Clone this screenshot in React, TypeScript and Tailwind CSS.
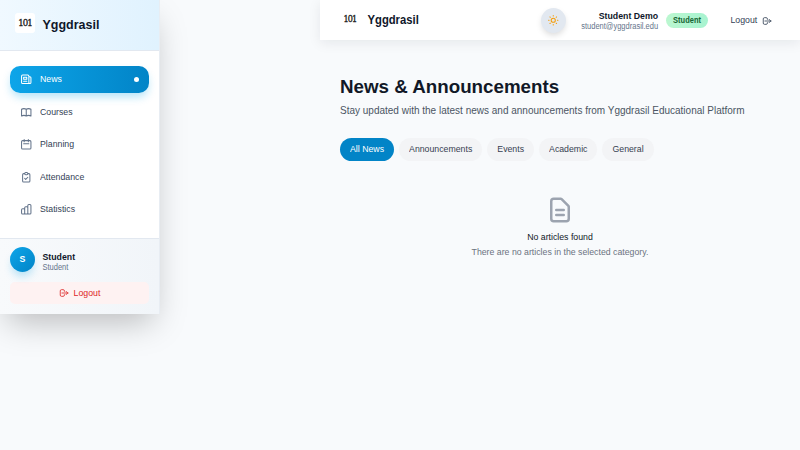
import type { ReactNode } from "react";

const icons = {
  news: "M19 20H5a2 2 0 01-2-2V6a2 2 0 012-2h10a2 2 0 012 2v1m2 13a2 2 0 01-2-2V7m2 13a2 2 0 002-2V9a2 2 0 00-2-2h-2m-4-3H9M7 16h6M7 8h6v4H7V8z",
  book: "M12 6.253v13m0-13C10.832 5.477 9.246 5 7.5 5S4.168 5.477 3 6.253v13C4.168 18.477 5.754 18 7.5 18s3.332.477 4.5 1.253m0-13C13.168 5.477 14.754 5 16.5 5c1.747 0 3.332.477 4.5 1.253v13C19.832 18.477 18.247 18 16.5 18c-1.746 0-3.332.477-4.5 1.253",
  calendar: "M8 7V3m8 4V3m-9 8h10M5 21h14a2 2 0 002-2V7a2 2 0 00-2-2H5a2 2 0 00-2 2v12a2 2 0 002 2z",
  clipboard: "M9 5H7a2 2 0 00-2 2v12a2 2 0 002 2h10a2 2 0 002-2V7a2 2 0 00-2-2h-2M9 5a2 2 0 002 2h2a2 2 0 002-2M9 5a2 2 0 012-2h2a2 2 0 012 2m-6 9l2 2 4-4",
  chart: "M9 19v-6a2 2 0 00-2-2H5a2 2 0 00-2 2v6a2 2 0 002 2h2a2 2 0 002-2zm0 0V9a2 2 0 012-2h2a2 2 0 012 2v10m-6 0a2 2 0 002 2h2a2 2 0 002-2m0 0V5a2 2 0 012-2h2a2 2 0 012 2v14a2 2 0 01-2 2h-2a2 2 0 01-2-2z",
  logout: "M17 16l4-4m0 0l-4-4m4 4H7m6 4v1a3 3 0 01-3 3H6a3 3 0 01-3-3V7a3 3 0 013-3h4a3 3 0 013 3v1",
  sun: "M12 3v1m0 16v1m9-9h-1M4 12H3m15.364 6.364l-.707-.707M6.343 6.343l-.707-.707m12.728 0l-.707.707M6.343 17.657l-.707.707M16 12a4 4 0 11-8 0 4 4 0 018 0z",
  document: "M9 12h6m-6 4h6m2 5H7a2 2 0 01-2-2V5a2 2 0 012-2h5.586a1 1 0 01.707.293l5.414 5.414a1 1 0 01.293.707V19a2 2 0 01-2 2z",
};

function Icon({ name, className, width = 2 }: { name: keyof typeof icons; className: string; width?: number }) {
  return (
    <svg className={`shrink-0 ${className}`} viewBox="0 0 24 24" fill="none" stroke="currentColor" strokeWidth={width} strokeLinecap="round" strokeLinejoin="round">
      <path d={icons[name]} />
    </svg>
  );
}

function Label({ children, tall = false }: { children: ReactNode; tall?: boolean }) {
  return <span className={`inline-block ${tall ? "scale-y-[1.125]" : "scale-y-[1.09]"}`}>{children}</span>;
}

function Logo({ className }: { className: string }) {
  return (
    <div className={`flex shrink-0 items-center justify-center bg-white font-['DejaVu_Serif_Condensed','DejaVu_Serif',serif] text-[#111] ${className}`}>
      <span className="[-webkit-text-stroke:0.3px_#222]">101</span>
    </div>
  );
}

function NavItem({ icon, children, active = false }: { icon: keyof typeof icons; children: ReactNode; active?: boolean }) {
  return (
    <a
      className={`flex h-[27.5px] items-center rounded-[10px] px-[10px] text-[8.75px] ${
        active
          ? "bg-linear-to-r from-[#0ea5e9] to-[#0284c7] text-white shadow-[0_5px_9px_-1px_rgba(14,165,233,0.3)]"
          : "text-[#334155]"
      }`}
    >
      <Icon name={icon} className={`mr-[7.5px] size-[12.5px] ${active ? "" : "text-[#64748b]"}`} />
      <span className="flex-1 pt-px"><Label tall>{children}</Label></span>
      {active && <span className="size-[5px] rounded-full bg-white" />}
    </a>
  );
}

const filters = ["All News", "Announcements", "Events", "Academic", "General"];

export default function App() {
  return (
    <div className="flex h-[450px] w-[800px] items-start overflow-hidden bg-[#f8fafc] font-['Liberation_Sans',sans-serif]">
      <aside className="mr-[160px] h-[314px] w-[160px] shrink-0 border-r border-[#e8edf3] bg-white shadow-[0_15px_31px_-7px_rgba(0,0,0,0.25)]">
        <div className="flex h-[51px] items-center border-b border-[#e2e8f0] bg-linear-to-r from-[#f0f9ff] to-[#e0f2fe] pt-px pr-[14px] pb-[5px] pl-[15px]">
          <Logo className="size-5 rounded-[3px] text-[9.5px] tracking-[-1px]" />
          <span className="ml-[7.5px] pt-[4px] text-[12.5px] leading-4 font-bold text-[#0f172a]">
            <Label>Yggdrasil</Label>
          </span>
        </div>
        <nav className="flex h-[187px] flex-col gap-[5px] px-[10px] pt-[14.5px]">
          <NavItem icon="news" active>News</NavItem>
          <NavItem icon="book">Courses</NavItem>
          <NavItem icon="calendar">Planning</NavItem>
          <NavItem icon="clipboard">Attendance</NavItem>
          <NavItem icon="chart">Statistics</NavItem>
        </nav>
        <div className="h-[76px] border-t border-[#e2e8f0] bg-linear-to-r from-[#f8fafc] to-[#f1f5f9] px-[10px] pt-[7px]">
          <div className="flex items-center gap-[7.5px]">
            <div className="flex size-[25px] items-center justify-center rounded-full bg-linear-to-br from-[#0ea5e9] to-[#0284c7] text-[8.75px] font-bold text-white shadow-[0_6px_9px_-2px_rgba(14,165,233,0.3)]">
              S
            </div>
            <div className="pt-[5px]">
              <p className="text-[8.75px] leading-[12px] font-bold text-[#0f172a]"><Label tall>Student</Label></p>
              <p className="text-[7.5px] leading-[10px] text-[#64748b]"><Label>Student</Label></p>
            </div>
          </div>
          <button className="mt-[8.5px] flex h-[22.5px] w-full items-center justify-center gap-[5px] rounded-[5px] bg-[#fef2f2] pt-px text-[8.75px] text-[#dc2626]">
            <Icon name="logout" className="size-[10px]" />
            <Label tall>Logout</Label>
          </button>
        </div>
      </aside>

      <div className="min-w-0 flex-1">
        <header className="flex h-10 items-center bg-white pr-[27.75px] pl-5 shadow-[0_3px_12px_rgba(15,23,42,0.08)]">
          <Logo className="size-5 text-[9px] tracking-[-0.9px]" />
          <span className="ml-[7.5px] text-[11.25px] font-bold text-[#0f172a]"><Label>Yggdrasil</Label></span>
          <div className="ml-auto flex items-center">
            <button className="flex size-[25px] items-center justify-center rounded-full bg-[#e2e8f0] text-[#f59e0b] shadow-[0_3px_6px_-1px_rgba(0,0,0,0.15)]">
              <Icon name="sun" className="size-[12.5px]" />
            </button>
            <div className="ml-[15px] pt-px text-right">
              <p className="text-[8.75px] leading-[12px] font-bold text-[#0f172a]"><Label tall>Student Demo</Label></p>
              <p className="text-[7.5px] leading-[10px] text-[#64748b]"><Label>student@yggdrasil.edu</Label></p>
            </div>
            <span className="ml-[7.5px] flex h-[15px] items-center rounded-full bg-linear-to-r from-[#bbf7d0] to-[#a7f3d0] px-[7.5px] pt-px text-[7.5px] font-bold text-[#166534]">
              <Label>Student</Label>
            </span>
            <button className="ml-[22px] flex items-center gap-[5px] pt-px text-[8.75px] text-[#334155]">
              <Label tall>Logout</Label>
              <Icon name="logout" className="size-[10px]" />
            </button>
          </div>
        </header>

        <main className="px-5 pt-[35px]">
          <h1 className="text-[18.75px] leading-[24px] font-bold text-[#111827]">News &amp; Announcements</h1>
          <p className="mt-[4px] text-[10px] leading-[15px] text-[#4b5563]">
            <Label>Stay updated with the latest news and announcements from Yggdrasil Educational Platform</Label>
          </p>
          <div className="mt-5 flex gap-[5px]">
            {filters.map((label, i) => (
              <button
                key={label}
                className={`h-[22.5px] rounded-full px-[10px] pt-px text-[8.75px] ${i === 0 ? "bg-[#0284c7] text-white" : "bg-[#f3f4f6] text-[#374151]"}`}
              >
                <Label tall>{label}</Label>
              </button>
            ))}
          </div>
          <div className="mt-[34.5px] flex flex-col items-center">
            <Icon name="document" className="size-[30px] text-[#9ca3af]" />
            <h3 className="mt-[5.5px] text-[8.75px] leading-[12.5px] text-[#111827]"><Label tall>No articles found</Label></h3>
            <p className="mt-[2.5px] text-[8.75px] leading-[12.5px] text-[#6b7280]"><Label tall>There are no articles in the selected category.</Label></p>
          </div>
        </main>
      </div>
    </div>
  );
}
